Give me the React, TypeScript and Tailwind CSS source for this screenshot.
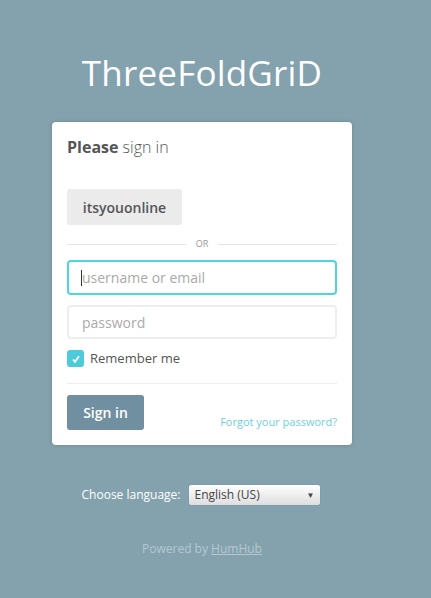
export default function App() {
  return (
    <div
      className="min-h-[598px] w-full bg-[#84a2ae] flex flex-col items-center pr-[27px]"
      style={{ fontFamily: '"Open Sans", sans-serif' }}
    >
      <div className="w-[300px] flex flex-col">
        <h1 className="mt-[50px] text-center text-white text-[35px] leading-[46px] font-normal tracking-[0.2px]">
          ThreeFoldGriD
        </h1>

        <div className="mt-[26px] bg-white rounded-[4px] shadow-[0_0_4px_rgba(0,0,0,0.18)] px-[15px] pt-[13px] pb-[15px]">
          <div className="text-[16px] leading-[24px] text-[#555]">
            <span className="font-bold">Please</span> <span className="font-light">sign in</span>
          </div>

          <button className="mt-[30px] h-[36px] w-[115px] rounded-[3px] bg-[#ebebeb] text-[14px] font-semibold text-[#555]">
            itsyouonline
          </button>

          <div className="mt-[13px] flex items-center gap-[10px]">
            <div className="flex-1 h-px bg-[#e5e5e5]" />
            <span className="text-[9px] leading-[12px] text-[#999]">OR</span>
            <div className="flex-1 h-px bg-[#e5e5e5]" />
          </div>

          <div className="mt-[10px] h-[35px] rounded-[4px] border-2 border-[#4fd4e3] flex items-center pl-[12px]">
            <div className="w-px h-[16px] bg-[#333]" />
            <span className="text-[14px] text-[#aaa]">username or email</span>
          </div>

          <div className="mt-[10px] h-[34px] rounded-[4px] border-2 border-[#eee] flex items-center pl-[13px]">
            <span className="text-[14px] text-[#aaa]">password</span>
          </div>

          <div className="mt-[10px] flex items-center gap-[6px]">
            <div className="w-[17px] h-[17px] rounded-[3px] bg-[#4ecbdb] flex items-center justify-center">
              <svg width="10" height="10" viewBox="0 0 10 10">
                <path d="M2 5.5 L4 7.8 L8 2.2" stroke="white" strokeWidth="1.8" fill="none" />
              </svg>
            </div>
            <span className="text-[13px] text-[#555]">Remember me</span>
          </div>

          <div className="mt-[14px] h-px bg-[#eee]" />

          <div className="mt-[11px] flex items-end justify-between">
            <button className="h-[35px] w-[77px] rounded-[3px] bg-[#708fa0] text-white text-[14px] font-semibold">
              Sign in
            </button>
            <a className="text-[11px] leading-[14px] text-[#6fcfdc] mb-[1px]">Forgot your password?</a>
          </div>
        </div>

        <div className="mt-[40px] flex items-center justify-center gap-[9px] pr-[2px]">
          <span className="text-[12px] text-white">Choose language:</span>
          <div className="w-[131px] h-[20px] rounded-[2px] bg-gradient-to-b from-[#ffffff] to-[#dedede] shadow-[0_0_1px_rgba(0,0,0,0.3)] flex items-center justify-between pl-[5px] pr-[6px]">
            <span className="text-[12px] text-[#444] leading-none">English (US)</span>
            <span className="text-[8px] text-[#444]">▼</span>
          </div>
        </div>

        <div className="mt-[35px] text-center text-[12px] text-[#b5c8d0]">
          Powered by <span className="underline">HumHub</span>
        </div>
      </div>
    </div>
  );
}
